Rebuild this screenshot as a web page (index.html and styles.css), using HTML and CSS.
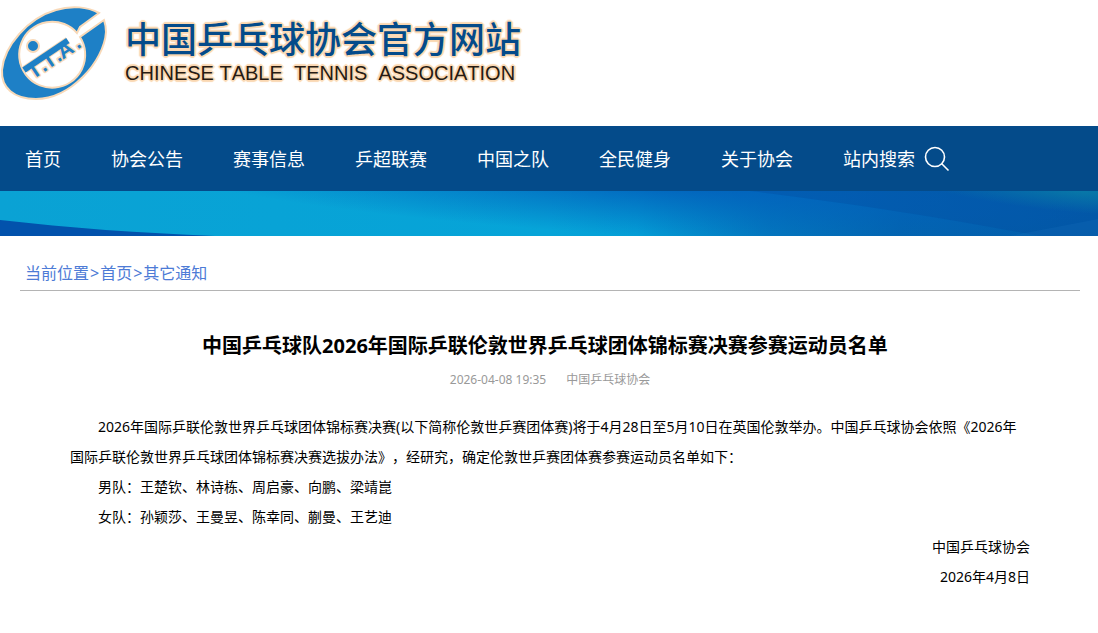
FILE: index.html
```html
<!DOCTYPE html>
<html lang="zh-CN">
<head>
    <meta charset="UTF-8">
    <meta name="viewport" content="width=device-width, initial-scale=1">
    <title>中国乒乓球协会官方网站</title>
    <link rel="stylesheet" href="styles.css">
</head>
<body>
<div class="header">
    <svg class="logo" viewBox="0 0 108 104" aria-hidden="true">
        <path class="logo-blue" d="M99 13C88 7 72 5 56 10C28 18 4 46 2 70C1 88 14 99 36 99C70 99 104 62 106 32C106 27 105 23 104 20L80 37A33 33 0 1 1 77 33L80 27Z"/>
        <circle class="logo-blue" cx="33" cy="46" r="6"/>
        <g transform="translate(22 69) rotate(-34)">
            <path class="logo-edge" d="M2 2H54"/>
            <text class="logo-text" x="3 16 21 34 39 57" y="15">T.T.A.</text>
            <path class="logo-bar" d="M1 2H54"/>
        </g>
    </svg>
    <div class="site-name">
        <h1>中国乒乓球协会官方网站</h1>
        <p>CHINESE TABLE  TENNIS  ASSOCIATION</p>
    </div>
</div>
<div class="nav">
    <ul>
        <li><a href="#">首页</a></li>
        <li><a href="#">协会公告</a></li>
        <li><a href="#">赛事信息</a></li>
        <li><a href="#">乒超联赛</a></li>
        <li><a href="#">中国之队</a></li>
        <li><a href="#">全民健身</a></li>
        <li><a href="#">关于协会</a></li>
        <li><a href="#" class="search">站内搜索
            <svg viewBox="0 0 26 26" aria-hidden="true"><circle cx="11" cy="11" r="9.5"/><path d="M17.5 17.5L24.5 24.5"/></svg>
        </a></li>
    </ul>
</div>
<svg class="banner" viewBox="0 0 1098 45" preserveAspectRatio="none" aria-hidden="true">
    <defs>
        <linearGradient id="sea" x1="0" x2="1" y1="0" y2="0">
            <stop offset="0" stop-color="#0aa2d4"/>
            <stop offset=".5" stop-color="#06a4d8"/>
            <stop offset=".58" stop-color="#049ed6"/>
            <stop offset=".7" stop-color="#0378be"/>
            <stop offset=".82" stop-color="#0364ae"/>
            <stop offset="1" stop-color="#025ca8"/>
        </linearGradient>
        <radialGradient id="deep" gradientUnits="userSpaceOnUse" cx="0" cy="0" r="1" gradientTransform="translate(690 -6) rotate(3) scale(560 54)">
            <stop offset="0" stop-color="#0262bc"/>
            <stop offset=".25" stop-color="#0262bc" stop-opacity=".75"/>
            <stop offset="1" stop-color="#0262bc" stop-opacity="0"/>
        </radialGradient>
        <radialGradient id="green" gradientUnits="userSpaceOnUse" cx="0" cy="0" r="1" gradientTransform="translate(1080 0) rotate(5) scale(170 22)">
            <stop offset="0" stop-color="#0878a8"/>
            <stop offset="1" stop-color="#0878a8" stop-opacity="0"/>
        </radialGradient>
    </defs>
    <rect width="1098" height="45" fill="url(#sea)"/>
    <rect width="1098" height="45" fill="url(#deep)"/>
    <path d="M750 0C850 12 950 28 1040 45H1098V0Z" fill="#024a9c" fill-opacity=".3"/>
    <rect width="1098" height="45" fill="url(#green)"/>
    <path d="M1010 45L1098 28V45Z" fill="#2a80c8" fill-opacity=".15"/>
    <path d="M0 29C70 37 140 42 215 45H0Z" fill="#0252ac"/>
</svg>
<div class="wrap">
    <div class="position">
        <a href="#">当前位置</a><span>&gt;</span><a href="#">首页</a><span>&gt;</span><a href="#">其它通知</a>
    </div>
    <div class="article">
        <h2>中国乒乓球队2026年国际乒联伦敦世界乒乓球团体锦标赛决赛参赛运动员名单</h2>
        <div class="info"><span>2026-04-08 19:35</span><span>中国乒乓球协会</span></div>
        <div class="content">
            <p>2026年国际乒联伦敦世界乒乓球团体锦标赛决赛(以下简称伦敦世乒赛团体赛)将于4月28日至5月10日在英国伦敦举办。中国乒乓球协会依照《2026年国际乒联伦敦世界乒乓球团体锦标赛决赛选拔办法》，经研究，确定伦敦世乒赛团体赛参赛运动员名单如下：</p>
            <p>男队：王楚钦、林诗栋、周启豪、向鹏、梁靖崑</p>
            <p>女队：孙颖莎、王曼昱、陈幸同、蒯曼、王艺迪</p>
            <p class="sign">中国乒乓球协会</p>
            <p class="sign">2026年4月8日</p>
        </div>
    </div>
</div>
</body>
</html>
```
FILE: styles.css
```css
/*初始化*/
body,h1,h2,p,ul{margin:0;padding:0}
body{font:14px/30px "Noto Sans", "Noto Sans CJK SC", sans-serif;color:#000;background:#fff;text-spacing-trim:space-all;}
ul{list-style:none}
a{color:inherit;text-decoration:none}
.header{
    display:flex;
    gap:17px;
    height:126px;
}
.logo{
    width:108px;
    height:104px;
    flex:none;
}
.logo-blue{
    fill:#1e80c6;
    stroke:#f8d9b8;
    stroke-width:2;
}
.logo-text{
    font:bold 21px "Liberation Sans", sans-serif;
    fill:#1e80c6;
    stroke:#f8d9b8;
    stroke-width:3;
    stroke-linejoin:round;
    paint-order:stroke;
}
.logo-edge{
    stroke:#f8d9b8;
    stroke-width:8;
}
.logo-bar{
    stroke:#1e80c6;
    stroke-width:6;
}
.site-name{
    padding-top:20px;
    text-shadow:2px 0 1px #fad8b2,-2px 0 1px #fad8b2,0 2px 1px #fad8b2,0 -2px 1px #fad8b2,1px 1px 1px #fad8b2,-1px -1px 1px #fad8b2,1px -1px 1px #fad8b2,-1px 1px 1px #fad8b2;
}
.site-name h1{
    font-size:36px;
    line-height:40px;
    font-weight:500;
    color:#044b8a;
    white-space:nowrap;
}
.site-name p{
    font:20px/26px "Liberation Sans", sans-serif;
    font-kerning:none;
    color:#261a12;
    white-space:pre;
}
.nav{
    background:#044b8a;
}
.nav ul{
    display:flex;
    gap:50px;
    padding:1px 25px 0;
    font-size:18px;
    line-height:64px;
    color:#fff;
    white-space:nowrap;
}
.search{
    display:flex;
    align-items:center;
    gap:9px;
}
.search svg{
    width:26px;
    height:26px;
    fill:none;
    stroke:#fff;
    stroke-width:1.6;
}
.banner{
    display:block;
    width:100%;
    height:45px;
}
.wrap{
    margin:0 18px 0 20px;
}
.position{
    display:flex;
    gap:1px;
    padding:22px 5px 2px;
    border-bottom:1px solid #b4b4b4;
    font-size:16px;
    color:#4d7bd6;
}
.article{
    padding:40px 50px 0;
}
.article h2{
    padding-right:10px;
    font-size:20px;
    text-align:center;
}
.info{
    display:flex;
    justify-content:center;
    gap:20px;
    padding:4px 0 17px;
    font-size:12px;
    color:#999;
}
.content p{
    text-indent:2em;
}
.content .sign{
    text-align:right;
}
```
